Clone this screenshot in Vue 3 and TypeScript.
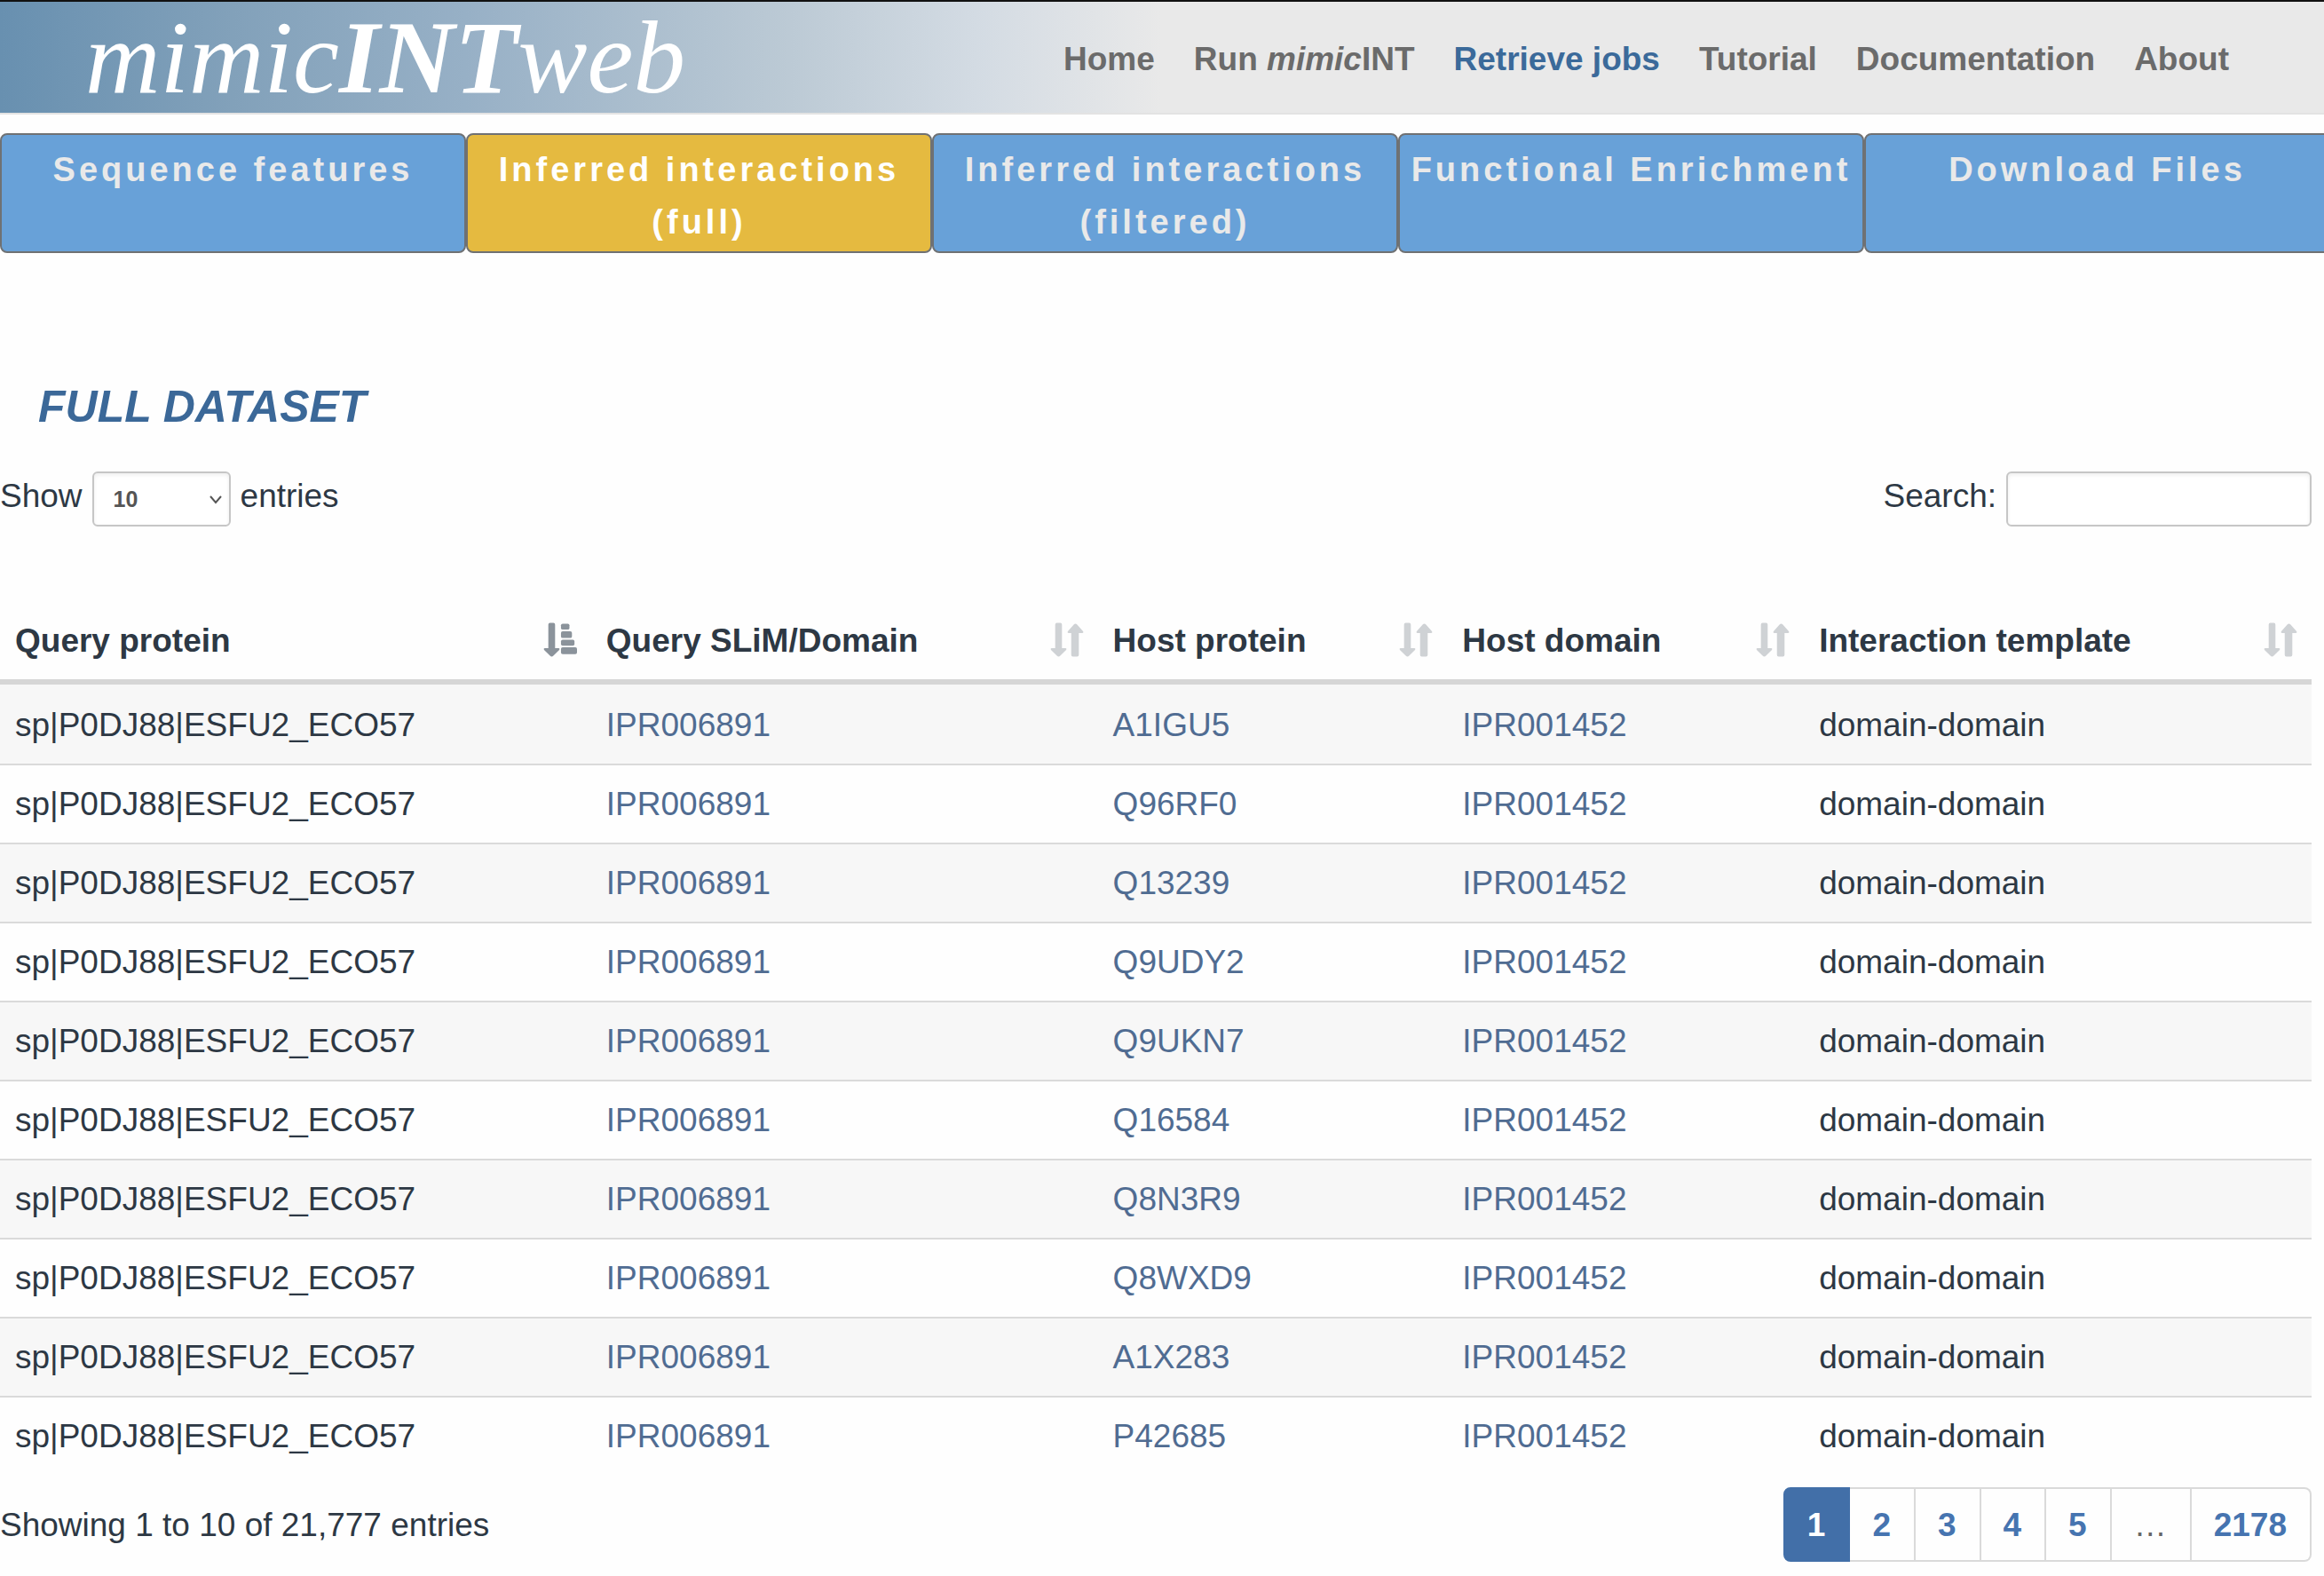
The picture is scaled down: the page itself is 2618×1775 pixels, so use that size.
<script setup lang="ts">
import { ref } from 'vue'

interface Interaction {
  query: string
  slim: string
  host: string
  domain: string
  template: string
}

const tabs: string[] = [
  'Sequence features',
  'Inferred interactions (full)',
  'Inferred interactions (filtered)',
  'Functional Enrichment',
  'Download Files',
]
const activeTab = ref(1)

const columns = [
  { label: 'Query protein', width: 25.57, sorted: true },
  { label: 'Query SLiM/Domain', width: 21.92, sorted: false },
  { label: 'Host protein', width: 15.12, sorted: false },
  { label: 'Host domain', width: 15.43, sorted: false },
  { label: 'Interaction template', width: 21.96, sorted: false },
]

const hosts = ['A1IGU5', 'Q96RF0', 'Q13239', 'Q9UDY2', 'Q9UKN7', 'Q16584', 'Q8N3R9', 'Q8WXD9', 'A1X283', 'P42685']
const rows: Interaction[] = hosts.map((host) => ({
  query: 'sp|P0DJ88|ESFU2_ECO57',
  slim: 'IPR006891',
  host,
  domain: 'IPR001452',
  template: 'domain-domain',
}))

const pageSize = ref('10')
const search = ref('')
const pages = ['1', '2', '3', '4', '5', '…', '2178']
const currentPage = ref('1')
</script>

<template>
  <div class="page">
    <header class="top">
      <a class="logo" href="#"><i>mimic<b>INT</b>web</i></a>
      <nav class="menu">
        <a href="#">Home</a>
        <a href="#">Run <i>mimic</i>INT</a>
        <a href="#" class="current">Retrieve jobs</a>
        <a href="#">Tutorial</a>
        <a href="#">Documentation</a>
        <a href="#">About</a>
      </nav>
    </header>

    <nav class="tabs">
      <button
        v-for="(tab, i) in tabs"
        :key="tab"
        type="button"
        :class="{ active: i === activeTab }"
        @click="activeTab = i"
      >{{ tab }}</button>
    </nav>

    <main class="content">
      <h1>FULL DATASET</h1>

      <div class="controls">
        <div class="control">
          <label for="page-size">Show</label>
          <span class="select">
            <select id="page-size" v-model="pageSize">
              <option>10</option>
              <option>25</option>
              <option>50</option>
              <option>100</option>
            </select>
            <svg viewBox="0 0 16 12" aria-hidden="true"><path d="M2 2l6 7 6-7" /></svg>
          </span>
          <span>entries</span>
        </div>
        <div class="control">
          <label for="search">Search:</label>
          <input id="search" v-model="search" type="search" />
        </div>
      </div>

      <table>
        <colgroup>
          <col v-for="c in columns" :key="c.label" :style="{ width: c.width + '%' }" />
        </colgroup>
        <thead>
          <tr>
            <th v-for="c in columns" :key="c.label" scope="col">
              <div class="head">
                <span>{{ c.label }}</span>
                <svg v-if="c.sorted" class="sorted" viewBox="0 0 40 40" aria-hidden="true">
                  <path d="M7 0h5q2 0 2 2v28h4q2 0 1 2l-7 7q-2 2-4 0l-7-7q-1-2 1-2h4V2q0-2 2-2z" />
                  <rect x="21" y="1" width="10" height="7" rx="2" />
                  <rect x="21" y="10" width="13" height="8" rx="2" />
                  <rect x="21" y="20" width="16" height="7" rx="2" />
                  <rect x="21" y="29" width="19" height="8" rx="2" />
                </svg>
                <svg v-else viewBox="0 0 40 40" aria-hidden="true">
                  <path d="M7 0h5q2 0 2 2v28h4q2 0 1 2l-7 7q-2 2-4 0l-7-7q-1-2 1-2h4V2q0-2 2-2z" />
                  <path d="M27 40h5q2 0 2-2V12h4q2 0 1-2l-7-8q-2-2-4 0l-7 8q-1 2 1 2h3v26q0 2 2 2z" />
                </svg>
              </div>
            </th>
          </tr>
        </thead>
        <tbody>
          <tr v-for="r in rows" :key="r.host">
            <td>{{ r.query }}</td>
            <td><a href="#">{{ r.slim }}</a></td>
            <td><a href="#">{{ r.host }}</a></td>
            <td><a href="#">{{ r.domain }}</a></td>
            <td>{{ r.template }}</td>
          </tr>
        </tbody>
      </table>

      <footer class="bottom">
        <p>Showing 1 to 10 of 21,777 entries</p>
        <ul class="pages">
          <li v-for="p in pages" :key="p" :class="{ active: p === currentPage }">
            <span v-if="p === '…'">…</span>
            <a v-else href="#" @click.prevent="currentPage = p">{{ p }}</a>
          </li>
        </ul>
      </footer>
    </main>
  </div>
</template>

<style>
body {
  margin: 0;
  background: #fefefe;
}
</style>

<style scoped>
.page {
  overflow-x: clip;
  font-family: 'Liberation Sans', Arial, sans-serif;
  font-size: 37px;
  line-height: 53px;
  color: #2d3844;
}
a {
  text-decoration: none;
}
.top {
  display: flex;
  align-items: center;
  justify-content: space-between;
  height: 125px;
  padding: 0 107px 0 96px;
  border-top: 2px solid #111;
  border-bottom: 2px solid #e3e3e3;
  background: linear-gradient(90deg, #6890b0 0%, #82a1ba 10%, #97b0c6 20%, #bccad5 34%, #d3dbe3 42%, #e9e9e9 50%);
}
.logo {
  font-family: 'Liberation Serif', 'Times New Roman', serif;
  font-size: 117px;
  line-height: 125px;
  color: #fff;
}
.menu {
  display: flex;
  gap: 44px;
  padding-top: 4px;
  font-weight: bold;
}
.menu a {
  color: #6b6b6b;
  white-space: nowrap;
}
.menu .current {
  color: #3b6a9a;
}
.tabs {
  display: flex;
  margin: 21px -7px 0 0;
}
.tabs button {
  display: flex;
  flex: 1 1 0;
  align-items: flex-start;
  justify-content: center;
  min-width: 0;
  padding: 10px 4px 3px;
  border: 2px solid #6f7173;
  border-radius: 8px;
  background: #68a1d8;
  color: #e9e9e9;
  font: bold 38px/59px 'Liberation Sans', Arial, sans-serif;
  letter-spacing: 4px;
  text-align: center;
}
.tabs .active {
  background: #e5ba40;
  color: #fff;
}
.content {
  padding-right: 14px;
}
h1 {
  margin: 145px 0 45px 43px;
  font-size: 50px;
  line-height: 56px;
  font-style: italic;
  color: #3b6898;
}
.controls {
  display: flex;
  justify-content: space-between;
  height: 62px;
}
.control {
  display: flex;
  align-items: baseline;
  gap: 11px;
}
.select {
  position: relative;
}
.select svg {
  position: absolute;
  right: 9px;
  top: 26px;
  width: 16px;
  height: 12px;
  fill: none;
  stroke: #555;
  stroke-width: 2;
}
select,
input {
  box-sizing: border-box;
  height: 62px;
  margin: 0;
  padding: 0 22px;
  border: 2px solid #c6c6c6;
  border-radius: 6px;
  background: #fff;
  box-shadow: inset 0 2px 4px rgba(0, 0, 0, 0.07);
  color: #555;
  font: bold 25px/32px 'Liberation Sans', Arial, sans-serif;
  appearance: none;
}
select {
  display: block;
  width: 156px;
}
input {
  width: 344px;
}
table {
  width: 100%;
  margin-top: 84px;
  border-collapse: separate;
  border-spacing: 0;
  table-layout: fixed;
}
th {
  padding: 18px 16px 17px 17px;
  border-bottom: 6px solid #d6d6d6;
  text-align: left;
}
.head {
  display: flex;
  align-items: flex-end;
  justify-content: space-between;
}
.head svg {
  width: 38px;
  height: 39px;
  margin-bottom: 8px;
  fill: #cfd2d5;
}
.head .sorted {
  fill: #8b939b;
}
td {
  padding: 17px;
  border-top: 2px solid #dadada;
}
tbody tr:nth-child(odd) {
  background: #f7f7f7;
}
tbody tr:first-child td {
  border-top-color: transparent;
}
td a {
  color: #506c92;
}
.bottom {
  display: flex;
  align-items: center;
  justify-content: space-between;
  padding: 14px 0 17px;
}
.bottom p {
  margin: 0;
}
.pages {
  display: flex;
  margin: 0;
  padding: 0;
  list-style: none;
  color: #666;
}
.pages li {
  padding: 14px 26px 13px 25px;
  border: 2px solid #dadada;
  border-left-width: 0;
}
.pages li:first-child {
  border-left-width: 2px;
  border-radius: 8px 0 0 8px;
}
.pages li:last-child {
  border-radius: 0 8px 8px 0;
}
.pages a {
  color: #4674b0;
  font-weight: bold;
}
.pages .active {
  border-color: #426fa8;
  background: #426fa8;
}
.pages .active a {
  color: #fff;
}
</style>
